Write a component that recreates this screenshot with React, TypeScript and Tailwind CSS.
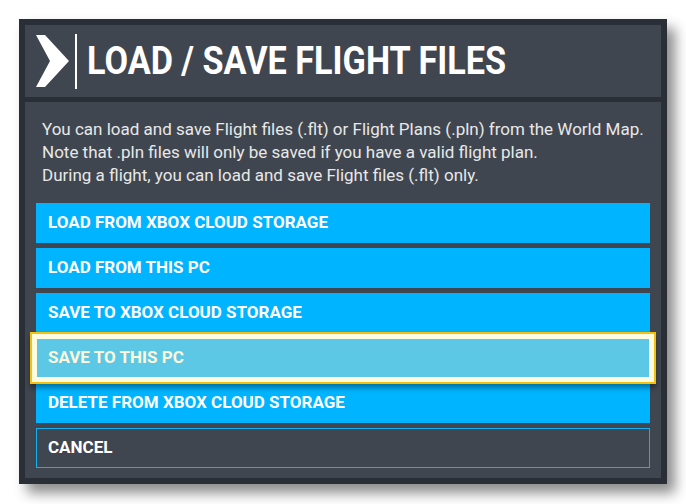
import React from 'react';

const options = [
  'LOAD FROM XBOX CLOUD STORAGE',
  'LOAD FROM THIS PC',
  'SAVE TO XBOX CLOUD STORAGE',
  'SAVE TO THIS PC',
  'DELETE FROM XBOX CLOUD STORAGE',
];

const selected = 'SAVE TO THIS PC';

const App: React.FC = () => {
  return (
    <div className="w-[686px] h-[504px] bg-white pt-[19px] pl-[19px] font-['Roboto',sans-serif]">
      <div className="w-[648px] h-[465px] bg-[#2a2f37] p-[6px] flex flex-col gap-[5px] shadow-[8px_9px_12px_rgba(0,0,0,0.45)]">
        {/* Header */}
        <div className="h-[72px] bg-[#3f4650] flex items-center pl-[11px]">
          <svg width="34" height="52" viewBox="0 0 34 52" className="shrink-0">
            <polygon points="0,0 9,0 33,26 9,52 0,52 14,26" fill="#ffffff" />
          </svg>
          <div className="w-[2px] h-[55px] bg-white ml-[5px] shrink-0" />
          <div className="ml-[10px] inline-block origin-left scale-x-[0.9] whitespace-nowrap text-[38px] font-bold leading-none text-white">
            LOAD / SAVE FLIGHT FILES
          </div>
        </div>

        {/* Body */}
        <div className="flex-1 bg-[#3f4650] pt-[16px] px-[11px]">
          <p className="pl-[6px] text-[17px] leading-[23px] text-[#e8e8e8] whitespace-nowrap">
            You can load and save Flight files (.flt) or Flight Plans (.pln) from the World Map.
            <br />
            Note that .pln files will only be saved if you have a valid flight plan.
            <br />
            During a flight, you can load and save Flight files (.flt) only.
          </p>

          <div className="mt-[16px] flex flex-col gap-[5px]">
            {options.map((label) =>
              label === selected ? (
                <div
                  key={label}
                  className="relative h-[40px] bg-[#5cc8e5] flex items-center pl-[12px] shadow-[inset_0_0_0_1px_#fffbe3,0_0_0_4px_#fffbe3,0_0_0_6px_#f4c20d,0_4px_5px_6px_rgba(0,0,0,0.35)] z-10"
                >
                  <span className="text-[17px] font-bold text-[#fdf8dc]">{label}</span>
                </div>
              ) : (
                <div key={label} className="h-[40px] bg-[#00b4ff] flex items-center pl-[12px]">
                  <span className="text-[17px] font-bold text-white">{label}</span>
                </div>
              )
            )}
            <div className="h-[40px] border border-[#13aef0] flex items-center pl-[11px]">
              <span className="text-[17px] font-bold text-white">CANCEL</span>
            </div>
          </div>
        </div>
      </div>
    </div>
  );
};

export default App;
